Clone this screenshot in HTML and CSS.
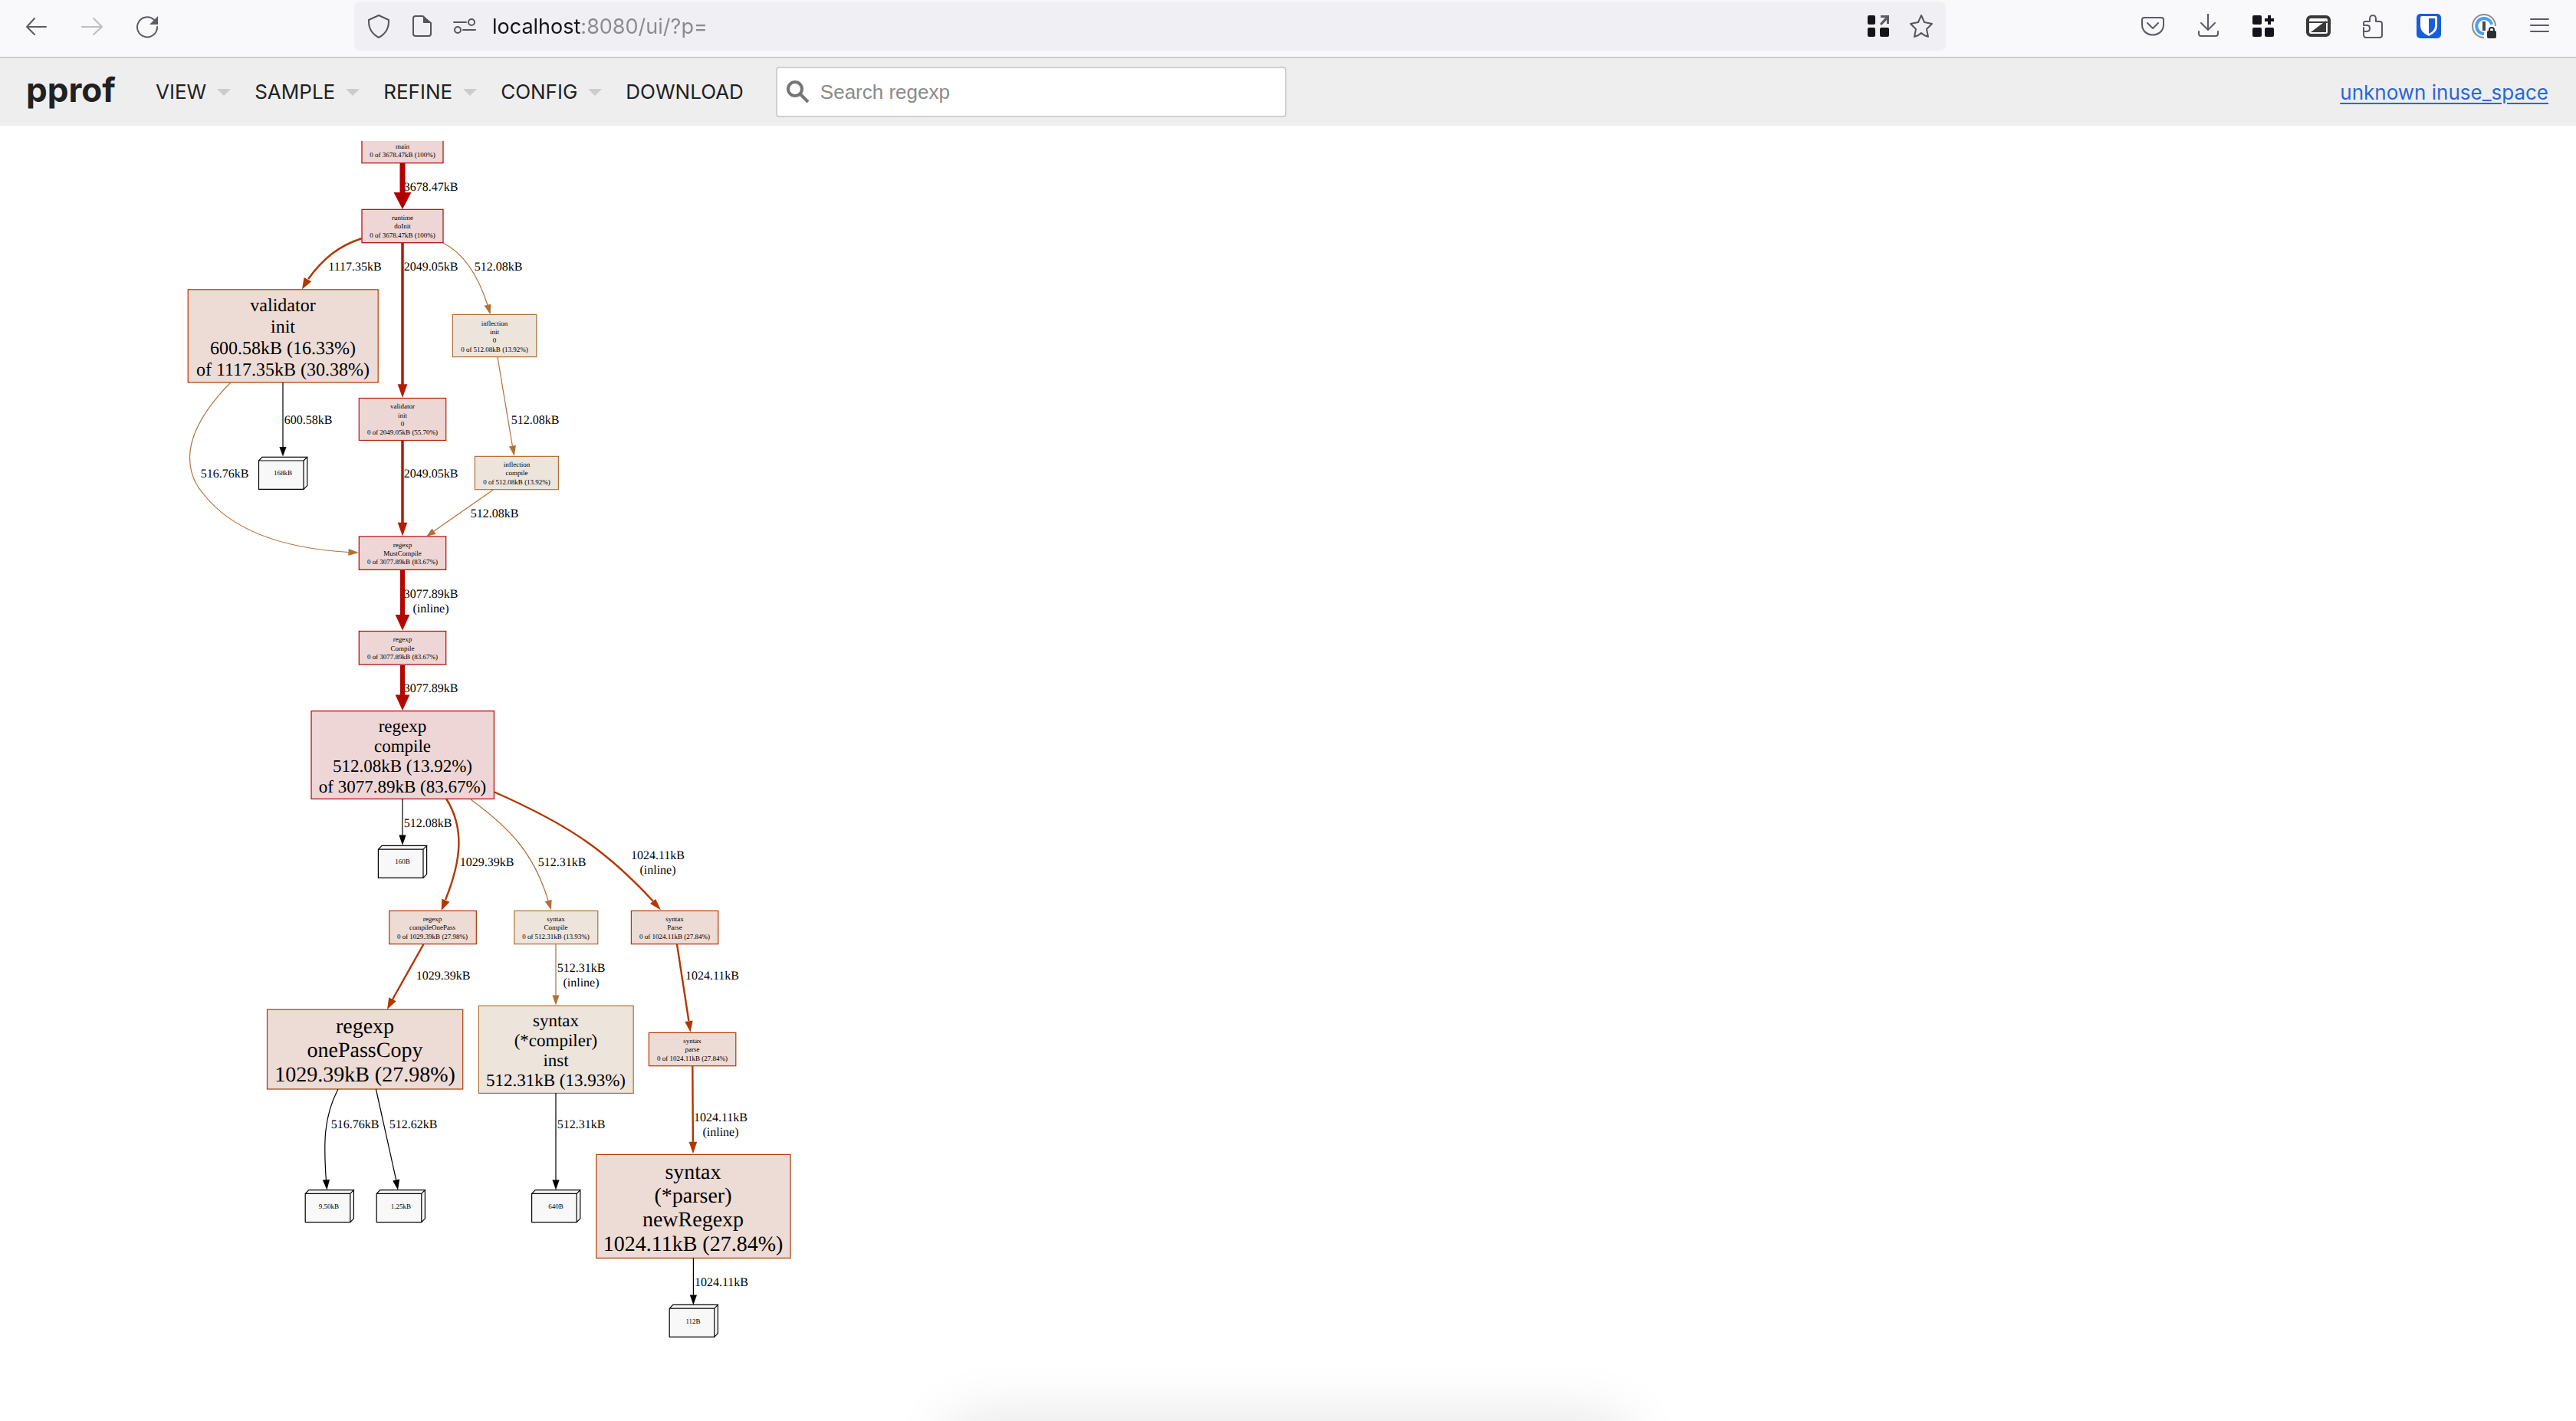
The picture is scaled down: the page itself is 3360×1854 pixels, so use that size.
FILE: index.html
```html
<!DOCTYPE html>
<html lang="en">
<head>
<meta charset="utf-8">
<title>pprof</title>
<link rel="stylesheet" href="styles.css">
</head>
<body>
<div class="toolbar">
  <div class="tools">
    <button class="tool" aria-label="Back"><svg class="icon" viewBox="0 0 32 32"><path d="M28 17H3M13 6 3 17l10 10"/></svg></button>
    <button class="tool tool-off" aria-label="Forward"><svg class="icon" viewBox="0 0 32 32"><path d="M3 17h25M18 6l11 11-11 10"/></svg></button>
    <button class="tool" aria-label="Reload"><svg class="icon" viewBox="0 0 32 32"><path d="M29 17A13 13 0 1 1 25 8"/><path class="solid" d="M30 3v11H19z"/></svg></button>
  </div>
  <div class="address">
    <button class="chip" aria-label="Tracking protection"><svg class="icon" viewBox="0 0 32 32"><path d="M16 2 29 8v2q0 14-13 21Q3 24 3 10V8z"/></svg></button>
    <button class="chip" aria-label="Page info"><svg class="icon" viewBox="0 0 32 32"><path d="M17 3H8q-3 0-3 3v20q0 3 3 3h17q3 0 3-3V12z"/><path class="solid" d="M18 2v10h10z"/></svg></button>
    <button class="chip" aria-label="Permissions"><svg class="icon" viewBox="0 0 32 32"><path d="M2 11h16M14 21h16"/><circle cx="25" cy="11" r="4"/><circle cx="7" cy="21" r="4"/></svg></button>
    <input class="url" type="text" aria-label="Address" value="localhost:8080/ui/?p=">
    <button class="chip" aria-label="Open in container"><svg class="icon dark" viewBox="0 0 32 32"><path class="solid" d="M4 2h6q2 0 2 2v8q0 2-2 2H4q-2 0-2-2V4q0-2 2-2zM4 18h6q2 0 2 2v8q0 2-2 2H4q-2 0-2-2v-8q0-2 2-2zM20 18h8q2 0 2 2v8q0 2-2 2h-8q-2 0-2-2v-8q0-2 2-2z"/><path class="grey" d="M19 2h11v11h-3V8l-7 7-2-2 7-8h-6z"/></svg></button>
    <button class="chip" aria-label="Bookmark this page"><svg class="icon" viewBox="0 0 32 32"><path d="m16 2 4 9 10 2-7 7 2 10q-5-1-9-5-4 4-9 5l2-10-7-7 10-2z"/></svg></button>
  </div>
  <div class="tools">
    <button class="tool" aria-label="Save to Pocket"><svg class="icon" viewBox="0 0 32 32"><path d="M5 5h22q3 0 3 3v6c0 18-28 18-28 0V8q0-3 3-3zM9 12l7 7 7-7"/></svg></button>
    <button class="tool" aria-label="Downloads"><svg class="icon" viewBox="0 0 32 32"><path d="M16 0v20M7 12l9 9 9-9M4 23v3q0 3 3 3h19q3 0 3-3v-3"/></svg></button>
    <button class="tool" aria-label="Add widget"><svg class="icon dark" viewBox="0 0 32 32"><path class="solid" d="M4 2h8q2 0 2 2v8q0 2-2 2H4q-2 0-2-2V4q0-2 2-2zM4 18h8q2 0 2 2v8q0 2-2 2H4q-2 0-2-2v-8q0-2 2-2zM20 18h8q2 0 2 2v8q0 2-2 2h-8q-2 0-2-2v-8q0-2 2-2z"/><path class="plus" d="M24 2v12M18 8h12"/></svg></button>
    <button class="tool" aria-label="Reader window"><svg class="icon slate" viewBox="0 0 32 32"><rect class="frame" x="2" y="4" width="28" height="24" rx="4"/><path d="M4 11h23"/><path class="solid" d="M6 24 26 9v15z"/></svg></button>
    <button class="tool" aria-label="Extensions"><svg class="icon" viewBox="0 0 32 32"><path d="M3 18v9q0 4 3 4h18q3 0 3-3V13q0-3-3-3h-5V7q0-5-4-5t-4 5v3H5q-2 0-2 2v3h4q4 0 4 4t-4 4H3"/></svg></button>
    <button class="tool" aria-label="Bitwarden"><svg class="icon" viewBox="0 0 32 32"><rect class="blue" width="32" height="32" rx="5"/><path class="white" d="M7 3h18q2 0 2 2v11q0 8-11 13Q5 24 5 16V5q0-2 2-2z"/><path class="blue" d="M16 6h8v10q0 6-8 10z"/></svg></button>
    <button class="tool" aria-label="1Password"><svg class="icon" viewBox="0 0 32 32"><path class="ring" d="M31 16A15 15 0 1 0 16 31"/><path class="ring-blue" d="M26 14A10 10 0 1 0 16 26"/><path class="bar" d="M16 10v12"/><rect class="lock" x="20" y="22" width="12" height="10" rx="2"/><path class="shackle" d="M23 23v-2q0-3 3-3t3 3v2"/></svg></button>
    <button class="tool" aria-label="Menu"><svg class="icon" viewBox="0 0 32 32"><path d="M5 7h23M5 15h23M5 23h23"/></svg></button>
  </div>
</div>

<header class="header">
  <h1 class="logo">pprof</h1>
  <nav class="menu">
    <button class="item">VIEW<i class="arrow"></i></button>
    <button class="item">SAMPLE<i class="arrow"></i></button>
    <button class="item">REFINE<i class="arrow"></i></button>
    <button class="item">CONFIG<i class="arrow"></i></button>
    <button class="item">DOWNLOAD</button>
  </nav>
  <label class="search">
    <svg class="glass" viewBox="0 0 30 30"><circle cx="11" cy="11" r="9"/><path d="m18 18 10 10"/></svg>
    <input class="search-box" type="text" placeholder="Search regexp" aria-label="Search regexp">
  </label>
  <a class="profile" href="#graph">unknown inuse_space</a>
</header>

<main class="content" id="graph">
<svg class="graph" viewBox="0 184 1100 1600" role="img" aria-label="Call graph">
  <g class="red">
    <rect x="472" y="169" width="106" height="43.7"/>
    <rect x="472" y="273.3" width="106" height="43.4"/>
    <rect x="468.3" y="700" width="113.4" height="43.4"/>
    <rect x="468.3" y="823.5" width="113.4" height="43.6"/>
    <rect x="406" y="927.7" width="238.4" height="114.6"/>
  </g>
  <g class="crimson"><rect x="468.3" y="519.5" width="113.4" height="55"/></g>
  <g class="rust">
    <rect x="245.2" y="377.8" width="248" height="121.2"/>
    <rect x="507.7" y="1188.4" width="113.6" height="43.3"/>
    <rect x="823.4" y="1188.4" width="113.4" height="43.3"/>
    <rect x="846.4" y="1347.4" width="113.4" height="43.3"/>
    <rect x="348.5" y="1317.2" width="255.2" height="103.8"/>
    <rect x="777.8" y="1506.4" width="253.2" height="135"/>
  </g>
  <g class="tan">
    <rect x="590.4" y="410.4" width="109.4" height="55.2"/>
    <rect x="619.4" y="595.4" width="109" height="43.3"/>
    <rect x="670.8" y="1188.4" width="109" height="43.3"/>
    <rect x="624.4" y="1312.2" width="201.8" height="114.2"/>
  </g>
  <g class="cube">
    <path d="M337.5 601H396v37.4h-58.5zM337.5 601l4.6-4.6h58.6L396 601M400.7 596.4v37.2l-4.7 4.8"/>
    <path d="M493.4 1108.2H552v37.2h-58.6zM493.4 1108.2l4.6-4.8h58.6L552 1108.2M556.6 1103.4v37.2l-4.6 4.8"/>
    <path d="M398.2 1557.4h58.6v37.2h-58.6zM398.2 1557.4l4.6-4.8h58.6l-4.6 4.8M461.4 1552.6v37.2l-4.6 4.8"/>
    <path d="M491.2 1557.4h58.6v37.2h-58.6zM491.2 1557.4l4.6-4.8h58.6l-4.6 4.8M554.4 1552.6v37.2l-4.6 4.8"/>
    <path d="M693.6 1557.4h58.6v37.2h-58.6zM693.6 1557.4l4.6-4.8h58.6l-4.6 4.8M756.8 1552.6v37.2l-4.6 4.8"/>
    <path d="M873.2 1707.2h58.6v37.2h-58.6zM873.2 1707.2l4.6-4.8h58.6l-4.6 4.8M936.4 1702.4v37.2l-4.6 4.8"/>
  </g>

  <g class="edge edge-full"><path d="M525 213v38"/><path class="head" d="M513.5 251h23L525 273z"/></g>
  <g class="edge edge-heavy">
    <path d="M525 744v58"/><path class="head" d="M515.6 802h18.8L525 822.5z"/>
    <path d="M525 868v39"/><path class="head" d="M515.6 906.5h18.8L525 927z"/>
  </g>
  <g class="edge edge-crimson">
    <path d="M525 317v185"/><path class="head" d="M518.7 501.3h12.6L525 519z"/>
    <path d="M525 575v107"/><path class="head" d="M518.7 681.7h12.6L525 699.5z"/>
  </g>
  <g class="edge edge-rust">
    <path d="M472 311C441 321 421 338 402 364"/><path class="head" d="M396.5 362l9.8 5.2L394 377.5z"/>
    <path d="M582 1042C606 1080 602 1122 581 1174"/><path class="head" d="M576.3 1172.7l10.2 4L575.7 1188z"/>
    <path d="M644 1033C732 1072 786 1104 852 1176"/><path class="head" d="M848 1179l7.2-6L862 1187.5z"/>
    <path d="M552.4 1232 512 1304"/><path class="head" d="M507.3 1301.3l9.4 5L505 1317z"/>
    <path d="M883 1232l15.4 100"/><path class="head" d="M893.3 1333l10.4-1.6-3.2 15.4z"/>
    <path d="M903.3 1391l.6 99"/><path class="head" d="M898.6 1489.8h10.6L904 1505.3z"/>
  </g>
  <g class="edge edge-tan">
    <path d="M578 317C608 332 625 364 636 398"/><path class="head" d="M631.6 398.7l8.8-2-.8 13.5z"/>
    <path d="M649 466l19.4 116"/><path class="head" d="M664 582.4l9-1.4-2.2 14z"/>
    <path d="M643.3 639 566 693"/><path class="head" d="M563.5 689.4l5.2 7.4L556 700z"/>
    <path d="M301 499C275 525 247 562 247.5 598C248 620 256 634 265 644C305 696 378 716 455 720.5"/><path class="head" d="M454.7 716l-.5 9 13.6-4z"/>
    <path d="M614 1043C664 1080 696 1112 715 1175"/><path class="head" d="M710.7 1176.2l8.9-2.4-.6 13.4z"/>
    <path d="M725 1232v67"/><path class="head" d="M720.4 1298.4h9.2L725 1311.6z"/>
  </g>
  <g class="edge edge-black">
    <path d="M369 499v84"/><path class="head" d="M364.4 583h9.2L369 595.6z"/>
    <path d="M525 1042v48"/><path class="head" d="M520.4 1089.5h9.2L525 1103z"/>
    <path d="M441 1421C422 1457 422 1492 425.4 1540"/><path class="head" d="M420.8 1539.6l9.2-.6-3.6 13.6z"/>
    <path d="M490.4 1421l26.4 119"/><path class="head" d="M512.2 1540.6l9-2-2.2 14z"/>
    <path d="M725 1426v114"/><path class="head" d="M720.4 1539.4h9.2L725 1552.6z"/>
    <path d="M904.4 1641v49"/><path class="head" d="M899.8 1689.4h9.2l-4.6 13z"/>
  </g>

  <g class="tiny">
    <text x="525" y="194">main</text><text x="525" y="205">0 of 3678.47kB (100%)</text>
    <text x="525" y="287">runtime</text><text x="525" y="298">doInit</text><text x="525" y="310">0 of 3678.47kB (100%)</text>
    <text x="645" y="425">inflection</text><text x="645" y="436">init</text><text x="645" y="447">0</text><text x="645" y="459">0 of 512.08kB (13.92%)</text>
    <text x="525" y="533">validator</text><text x="525" y="545">init</text><text x="525" y="556">0</text><text x="525" y="567">0 of 2049.05kB (55.70%)</text>
    <text x="674" y="609">inflection</text><text x="674" y="620">compile</text><text x="674" y="632">0 of 512.08kB (13.92%)</text>
    <text x="525" y="714">regexp</text><text x="525" y="725">MustCompile</text><text x="525" y="736">0 of 3077.89kB (83.67%)</text>
    <text x="525" y="837">regexp</text><text x="525" y="849">Compile</text><text x="525" y="860">0 of 3077.89kB (83.67%)</text>
    <text x="564" y="1202">regexp</text><text x="564" y="1213">compileOnePass</text><text x="564" y="1225">0 of 1029.39kB (27.98%)</text>
    <text x="725" y="1202">syntax</text><text x="725" y="1213">Compile</text><text x="725" y="1225">0 of 512.31kB (13.93%)</text>
    <text x="880" y="1202">syntax</text><text x="880" y="1213">Parse</text><text x="880" y="1225">0 of 1024.11kB (27.84%)</text>
    <text x="903" y="1361">syntax</text><text x="903" y="1372">parse</text><text x="903" y="1384">0 of 1024.11kB (27.84%)</text>
    <text x="369" y="620">168kB</text><text x="525" y="1127">160B</text><text x="429" y="1577">9.50kB</text>
    <text x="523" y="1577">1.25kB</text><text x="725" y="1577">640B</text><text x="904" y="1727">112B</text>
  </g>
  <g class="label">
    <text x="562" y="249">3678.47kB</text><text x="463" y="353">1117.35kB</text><text x="562" y="353">2049.05kB</text><text x="650" y="353">512.08kB</text>
    <text x="402" y="553">600.58kB</text><text x="698" y="553">512.08kB</text><text x="293" y="623">516.76kB</text><text x="562" y="623">2049.05kB</text>
    <text x="645" y="675">512.08kB</text><text x="562" y="780">3077.89kB</text><text x="562" y="799">(inline)</text><text x="562" y="903">3077.89kB</text>
    <text x="558" y="1079">512.08kB</text><text x="635" y="1130">1029.39kB</text><text x="733" y="1130">512.31kB</text>
    <text x="858" y="1121">1024.11kB</text><text x="858" y="1140">(inline)</text><text x="578" y="1278">1029.39kB</text>
    <text x="758" y="1268">512.31kB</text><text x="758" y="1287">(inline)</text><text x="929" y="1278">1024.11kB</text>
    <text x="463" y="1472">516.76kB</text><text x="539" y="1472">512.62kB</text><text x="758" y="1472">512.31kB</text>
    <text x="940" y="1463">1024.11kB</text><text x="940" y="1482">(inline)</text><text x="941" y="1678">1024.11kB</text>
  </g>
  <g class="medium">
    <text x="525" y="955">regexp</text><text x="525" y="981">compile</text><text x="525" y="1007">512.08kB (13.92%)</text><text x="525" y="1034">of 3077.89kB (83.67%)</text>
    <text x="725" y="1339">syntax</text><text x="725" y="1365">(*compiler)</text><text x="725" y="1391">inst</text><text x="725" y="1417">512.31kB (13.93%)</text>
  </g>
  <g class="large">
    <text x="369" y="406">validator</text><text x="369" y="434">init</text><text x="369" y="462">600.58kB (16.33%)</text><text x="369" y="490">of 1117.35kB (30.38%)</text>
  </g>
  <g class="huge">
    <text x="476" y="1348">regexp</text><text x="476" y="1379">onePassCopy</text><text x="476" y="1411">1029.39kB (27.98%)</text>
    <text x="904" y="1538">syntax</text><text x="904" y="1569">(*parser)</text><text x="904" y="1600">newRegexp</text><text x="904" y="1632">1024.11kB (27.84%)</text>
  </g>
</svg>
</main>
<div class="dock-shadow"></div>
</body>
</html>
```
FILE: styles.css
```css
* { box-sizing: border-box; }
body {
  margin: 0;
  background: #fff;
  color: #212121;
  font-family: Inter, "Liberation Sans", sans-serif;
}
button {
  margin: 0;
  padding: 0;
  border: 0;
  background: none;
  color: inherit;
  font: inherit;
}

/* browser toolbar */
.toolbar {
  display: flex;
  align-items: center;
  height: 76px;
  padding: 0 12px;
  background: #f9f9fb;
  border-bottom: 2px solid #ccc;
}
.tools { display: flex; padding-bottom: 6px; }
.tool {
  display: flex;
  justify-content: center;
  align-items: center;
  width: 72px;
  height: 64px;
  color: #5b5b66;
}
.tool-off { color: #bdbdc2; }
.address {
  display: flex;
  align-items: center;
  flex: 1;
  height: 64px;
  margin: 0 234px 6px;
  padding: 0 4px;
  border-radius: 8px;
  background: #f0f0f4;
}
.chip {
  display: flex;
  justify-content: center;
  width: 56px;
  color: #55555c;
}
.icon {
  width: 32px;
  height: 32px;
  fill: none;
  stroke: currentColor;
  stroke-width: 2;
  stroke-linecap: round;
  stroke-linejoin: round;
}
.solid { fill: currentColor; stroke: none; }
.dark { color: #15141a; }
.grey { fill: #5b5b66; stroke: none; }
.plus { stroke-width: 4; stroke-linecap: butt; }
.slate { color: #3a3a3a; }
.frame { stroke-width: 4; }
.blue { fill: #175ddc; stroke: none; }
.white { fill: #fff; stroke: none; }
.ring { stroke: #8c8c8c; stroke-linecap: butt; }
.ring-blue { stroke: #44a0ff; stroke-width: 4; stroke-linecap: butt; }
.bar { stroke: #4a4a4a; stroke-width: 4; stroke-linecap: butt; }
.lock { fill: #2e2e2e; stroke: none; }
.shackle { stroke: #2e2e2e; }
.url {
  flex: 1;
  min-width: 0;
  height: 48px;
  padding: 0 8px;
  border: 0;
  outline: 0;
  background: linear-gradient(90deg, #15141a 124px, #8a8a8e 124px);
  -webkit-background-clip: text;
  background-clip: text;
  -webkit-text-fill-color: transparent;
  font: 27px Inter, sans-serif;
}

/* page header */
.header {
  display: flex;
  align-items: center;
  height: 88px;
  padding: 0 36px 0 34px;
  background: #eee;
}
.logo {
  width: 169px;
  margin: 0;
  font-size: 44px;
  line-height: 48px;
  padding-bottom: 6px;
}
.menu { display: flex; gap: 31px; }
.item {
  display: flex;
  align-items: center;
  font-size: 26px;
  line-height: 32px;
}
.arrow {
  margin-left: 14px;
  border: 9px solid transparent;
  border-top-color: #ccc;
  border-bottom-width: 0;
}
.search {
  display: flex;
  align-items: center;
  width: 666px;
  height: 66px;
  margin-left: 42px;
  padding-left: 12px;
  border: 2px solid #d0d0d0;
  border-radius: 4px;
  background: #fff;
}
.glass {
  width: 30px;
  height: 30px;
  fill: none;
  stroke: #757575;
  stroke-width: 4;
}
.search-box {
  flex: 1;
  min-width: 0;
  padding: 0 14px;
  border: 0;
  outline: 0;
  background: none;
  color: #212121;
  font: 26px "Liberation Sans", sans-serif;
}
.search-box::placeholder { color: #8a8a8a; }
.profile {
  margin-left: auto;
  color: #2a66d9;
  font-size: 26px;
  text-decoration-thickness: 2px;
  text-underline-offset: 4px;
}

/* call graph */
.content { padding-top: 20px; }
.graph { display: block; width: 1100px; }
.graph rect, .cube { stroke-width: 1.2; }
.red { fill: #edd6d5; stroke: #b20400; }
.crimson { fill: #edd7d5; stroke: #b21c00; }
.rust { fill: #eddbd5; stroke: #b23700; }
.tan { fill: #ede4dc; stroke: #b27035; }
.cube { fill: #f8f8f8; stroke: #000; }
.edge { fill: none; }
.head { stroke: none; }
.edge-full { stroke: #b20000; stroke-width: 7; }
.edge-full .head { fill: #b20000; }
.edge-heavy { stroke: #b20800; stroke-width: 6; }
.edge-heavy .head { fill: #b20800; }
.edge-crimson { stroke: #b21c00; stroke-width: 3.5; }
.edge-crimson .head { fill: #b21c00; }
.edge-rust { stroke: #b23700; stroke-width: 2.4; }
.edge-rust .head { fill: #b23700; }
.edge-tan { stroke: #b27035; stroke-width: 1.2; }
.edge-tan .head { fill: #b27035; }
.edge-black { stroke: #000; stroke-width: 1.2; }
.edge-black .head { fill: #000; }
.graph text {
  fill: #000;
  font-family: "Liberation Serif", serif;
  text-anchor: middle;
  text-rendering: geometricPrecision;
}
.tiny { font-size: 9px; }
.label { font-size: 16px; }
.medium { font-size: 23px; }
.large { font-size: 24px; }
.huge { font-size: 28px; }

/* soft shadow rising from the bottom edge of the window */
.dock-shadow {
  position: fixed;
  right: 0;
  bottom: -100px;
  left: 0;
  width: 880px;
  height: 100px;
  margin: 0 auto;
  border-radius: 20px;
  box-shadow: 0 0 80px rgba(0, 0, 0, 0.12);
}
```
